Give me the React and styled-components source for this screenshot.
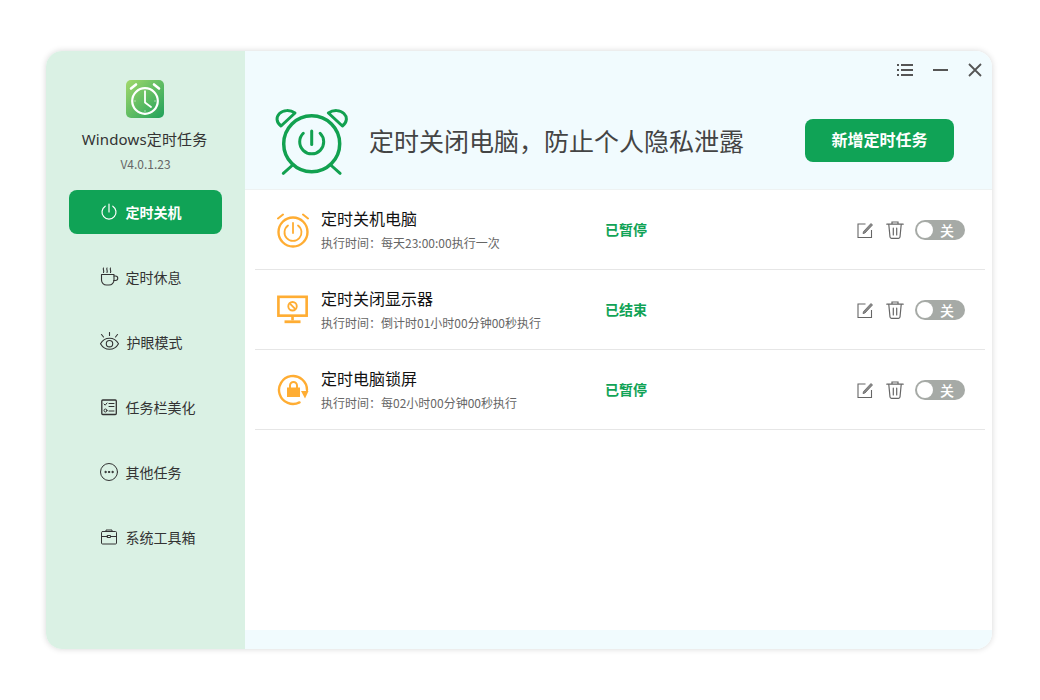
import React from "react";
import styled, { createGlobalStyle } from "styled-components";

const GlobalStyle = createGlobalStyle`
  html, body {
    margin: 0;
    padding: 0;
    background: #fff;
    font-family: "Noto Sans CJK SC", "Noto Sans", sans-serif;
  }
`;

const Page = styled.div`
  width: 1040px;
  height: 700px;
  padding: 51px 48px 51px 46px;
  box-sizing: border-box;
`;

const Win = styled.div`
  height: 100%;
  display: flex;
  border-radius: 16px;
  overflow: hidden;
  box-shadow: 0 0 6px rgba(0, 0, 0, 0.16);
`;

const Sidebar = styled.aside`
  width: 199px;
  flex: none;
  background: #daf1e4;
  display: flex;
  flex-direction: column;
  align-items: center;
  padding-top: 29px;
  box-sizing: border-box;
  > svg { margin-right: 2px; }
`;

const AppName = styled.div`
  margin: 9px 2px 0 0;
  font-family: "Noto Sans", "Noto Sans CJK SC", sans-serif;
  font-size: 15px;
  letter-spacing: 0.15px;
  line-height: 24px;
  color: #333;
`;

const Version = styled.div`
  margin-top: 4px;
  font-size: 12px;
  line-height: 18px;
  color: #666;
`;

const Nav = styled.nav`
  margin-top: 17px;
  width: 153px;
  margin-left: -1px;
  display: flex;
  flex-direction: column;
  gap: 21px;
`;

const NavItem = styled.div`
  height: 44px;
  display: flex;
  align-items: center;
  gap: 7px;
  padding-left: 30px;
  border-radius: 8px;
  font-size: 14px;
  font-weight: ${(p) => (p.$active ? 700 : 400)};
  color: ${(p) => (p.$active ? "#fff" : "#333")};
  background: ${(p) => (p.$active ? "#10a356" : "transparent")};
  svg { flex: none; }
`;

const Main = styled.main`
  flex: 1;
  display: flex;
  flex-direction: column;
  background: #f1fbfe;
`;

const Header = styled.header`
  height: 138px;
  flex: none;
  position: relative;
  display: flex;
  align-items: center;
  padding: 44px 38px 0 29px;
  box-sizing: border-box;
`;

const WinControls = styled.div`
  position: absolute;
  top: 10px;
  right: 8px;
  display: flex;
  align-items: center;
  gap: 17px;
`;

const Slogan = styled.h1`
  margin: -4px 0 0 21px;
  flex: 1;
  font-size: 25px;
  font-weight: 400;
  color: #444;
  line-height: 34px;
`;

const AddButton = styled.button`
  width: 149px;
  height: 43px;
  border: 0;
  padding: 0 0 2px;
  border-radius: 8px;
  background: #10a356;
  color: #fff;
  font-family: inherit;
  font-size: 16px;
  font-weight: 700;
  margin-top: -4px;
`;

const List = styled.section`
  flex: 1;
  background: #fff;
  border-top: 1px solid #eef2f2;
  padding: 0 7px 0 10px;
`;

const Row = styled.div`
  height: 80px;
  box-sizing: border-box;
  border-bottom: 1px solid #e6e6e6;
  display: flex;
  align-items: center;
  padding: 0 20px 0 22px;
`;

const RowIcon = styled.div`
  width: 32px;
  height: 36px;
  flex: none;
  display: flex;
  align-items: center;
  justify-content: center;
`;

const RowText = styled.div`
  width: 284px;
  margin-left: 12px;
  flex: none;
`;

const RowTitle = styled.div`
  font-size: 16px;
  line-height: 20px;
  color: #111;
`;

const RowDesc = styled.div`
  margin-top: 6px;
  font-size: 12px;
  line-height: 18px;
  color: #666;
`;

const Status = styled.div`
  flex: 1;
  padding-bottom: 2px;
  font-size: 14px;
  font-weight: 700;
  color: #10a356;
`;

const Actions = styled.div`
  display: flex;
  align-items: center;
  gap: 10px;
`;

const Toggle = styled.div`
  width: 50px;
  height: 20px;
  border-radius: 10px;
  background: #a6aaa6;
  position: relative;
  color: #fff;
  font-size: 14px;
  font-weight: 500;
  line-height: 20px;
  padding-left: 25px;
  box-sizing: border-box;
  &::before {
    content: "";
    position: absolute;
    left: 2px;
    top: 2px;
    width: 16px;
    height: 16px;
    border-radius: 50%;
    background: #fff;
  }
`;

const Footer = styled.div`
  height: 19px;
  flex: none;
`;

const line = { fill: "none", stroke: "currentColor", strokeLinecap: "round", strokeLinejoin: "round" };

const PowerIcon = () => (
  <svg width="20" height="20" viewBox="0 0 20 20" style={line} strokeWidth="1.2">
    <path d="M6.2 4.2a7 7 0 1 0 7.6 0" />
    <path d="M10 2v8" />
  </svg>
);

const CupIcon = () => (
  <svg width="20" height="20" viewBox="0 0 20 20" style={line} strokeWidth="1.1">
    <path d="M2.500 7.500H15V13a5 5 0 0 1-5 5H7.500a5 5 0 0 1-5-5z" />
    <path d="M15 9h1.500a2.200 2.200 0 0 1 0 4.500h-1.800" />
    <path d="M4.500 1c-1 1.200 1 2.500 0 4.500M8 1c-1 1.200 1 2.500 0 4.500M11.500 1c-1 1.200 1 2.500 0 4.500" />
  </svg>
);

const EyeIcon = () => (
  <svg width="21" height="20" viewBox="0 0 21 20" style={line} strokeWidth="1.1">
    <path d="M1.500 11.700c2-3.600 5-5.500 9-5.500s7 1.900 9 5.500c-2 3.600-5 5.500-9 5.500s-7-1.900-9-5.500z" />
    <circle cx="10.500" cy="11.700" r="3.200" />
    <path d="M10.500.5v3M2.500 2.500l2 2.500M18.500 2.500l-2 2.500" />
  </svg>
);

const ListCheckIcon = () => (
  <svg width="20" height="20" viewBox="0 0 20 20" style={line} strokeWidth="1">
    <rect x="2.800" y="3" width="14.500" height="14.500" rx="1" strokeWidth="1.300" />
    <path d="M5 7l1.200 1.200L8 6M10 6.500h5M10 9.500h5M10 14h5" />
    <circle cx="6.500" cy="13.500" r="1.500" />
  </svg>
);

const MoreIcon = () => (
  <svg width="20" height="20" viewBox="0 0 20 20" style={line} strokeWidth="1">
    <circle cx="10" cy="10" r="8.500" />
    <circle cx="6.500" cy="10" r="0.700" fill="currentColor" />
    <circle cx="10" cy="10" r="0.700" fill="currentColor" />
    <circle cx="13.500" cy="10" r="0.700" fill="currentColor" />
  </svg>
);

const BoxIcon = () => (
  <svg width="20" height="20" viewBox="0 0 20 20" style={line} strokeWidth="1">
    <rect x="2.500" y="4.500" width="15" height="12.500" rx="1" />
    <path d="M7 4.500V3h6v1.500M2.500 9.500h6M11.500 9.500h6" />
    <path d="M8.500 8.500h3v2h-3z" />
  </svg>
);

const AppLogo = () => (
  <svg width="38" height="38" viewBox="0 0 38 38">
    <defs>
      <linearGradient id="logoBg" x1="0" y1="0" x2="1" y2="1">
        <stop offset="0" stopColor="#a3d96c" />
        <stop offset="1" stopColor="#1fa15a" />
      </linearGradient>
    </defs>
    <rect width="38" height="38" rx="5" fill="url(#logoBg)" />
    <circle cx="19" cy="21" r="12.800" fill="none" stroke="#fff" strokeWidth="2.200" />
    <path d="M5 8.500 10 4.500M33 8.500l-5-4" fill="none" stroke="#fff" strokeWidth="2.600" strokeLinecap="round" />
    <path d="M19 11.500v11l6 4.500" fill="none" stroke="#fff" strokeWidth="1.800" strokeLinecap="round" strokeLinejoin="round" />
    <path d="M19 10.500v1M19 30.500v1M8.500 21h1M28.500 21h1" stroke="#fff" strokeWidth="1" />
  </svg>
);

const BigClock = () => (
  <svg width="74" height="68" viewBox="0 0 74 68">
    <g fill="none" stroke="#12a150" strokeLinecap="round" strokeLinejoin="round">
      <circle cx="37.700" cy="35.700" r="28" strokeWidth="3.500" />
      <path d="M7 18 21 5C16 1.500 9 2 5.500 5.500 2 9 2 14 7 18z" strokeWidth="3" />
      <path d="M68.400 18 54.400 5c5-3.500 12-3 15.500.5 3.500 3.500 3.500 8.500-1.500 12.500z" strokeWidth="3" />
      <path d="M18.700 57l-9.400 8.300M56.700 57l9.400 8.300" strokeWidth="3" />
      <path d="M29.300 25.300a12 12 0 1 0 16.800 0" strokeWidth="3" />
      <path d="M37.700 23v13.500" strokeWidth="3" />
    </g>
  </svg>
);

const AlarmOrange = () => (
  <svg width="32" height="36" viewBox="0 0 32 36" fill="none" stroke="#ffad33" strokeLinecap="round">
    <circle cx="16" cy="20" r="14.500" strokeWidth="2.400" />
    <path d="M1 6.500 6 2.500M31 6.500l-5-4" strokeWidth="2" />
    <path d="M11 13.500a8.500 8.500 0 1 0 10 0" strokeWidth="1.800" />
    <path d="M16 11v10" strokeWidth="1.800" />
  </svg>
);

const MonitorOrange = () => (
  <svg width="34" height="32" viewBox="0 0 34 32" fill="none" stroke="#ffad33">
    <rect x="1.500" y="2" width="30" height="20" strokeWidth="2.800" />
    <path d="M16.500 22v5" strokeWidth="2.800" />
    <path d="M8 28.500h17" strokeWidth="3" />
    <circle cx="16.500" cy="12" r="4.500" strokeWidth="2" />
    <path d="M13.500 9l6 6" strokeWidth="2" />
  </svg>
);

const LockOrange = () => (
  <svg width="32" height="34" viewBox="0 0 32 34" fill="none" stroke="#ffad33">
    <path d="M30 17A14 14 0 1 0 22.500 29.400" strokeWidth="2.400" strokeLinecap="round" />
    <path d="M24 18h7.500l-3.500 7.500z" fill="#ffad33" stroke="none" />
    <rect x="10" y="14.500" width="13" height="9.500" fill="#ffad33" stroke="none" />
    <path d="M13 15v-2.500a3.500 3.500 0 0 1 7 0V15" strokeWidth="2" />
  </svg>
);

const EditIcon = () => (
  <svg width="20" height="20" viewBox="0 0 20 20" fill="none" stroke="#666" strokeWidth="1.100">
    <path d="M10.500 4H3v13.500h13.500V10" />
    <path d="M8.500 11.500 16 3.500l1.500 1.500-7.500 8-2 .6z" fill="#888" strokeWidth="0.800" />
  </svg>
);

const TrashIcon = () => (
  <svg width="20" height="20" viewBox="0 0 20 20" fill="none" stroke="#666" strokeWidth="1.200" strokeLinecap="round">
    <path d="M1.800 4.200h16.400M7 4V2h6v2" />
    <path d="M3.800 4.500 5 17a1.500 1.500 0 0 0 1.500 1.300h7A1.500 1.500 0 0 0 15 17l1.200-12.500" />
    <path d="M8.300 8v7M11.700 8v7" />
  </svg>
);

const navItems = [
  { label: "定时关机", icon: <PowerIcon />, active: true },
  { label: "定时休息", icon: <CupIcon /> },
  { label: "护眼模式", icon: <EyeIcon /> },
  { label: "任务栏美化", icon: <ListCheckIcon /> },
  { label: "其他任务", icon: <MoreIcon /> },
  { label: "系统工具箱", icon: <BoxIcon /> },
];

const tasks = [
  { title: "定时关机电脑", desc: "执行时间：每天23:00:00执行一次", status: "已暂停", icon: <AlarmOrange /> },
  { title: "定时关闭显示器", desc: "执行时间：倒计时01小时00分钟00秒执行", status: "已结束", icon: <MonitorOrange /> },
  { title: "定时电脑锁屏", desc: "执行时间：每02小时00分钟00秒执行", status: "已暂停", icon: <LockOrange /> },
];

export default function App() {
  return (
    <Page>
      <GlobalStyle />
      <Win>
        <Sidebar>
          <AppLogo />
          <AppName>Windows定时任务</AppName>
          <Version>V4.0.1.23</Version>
          <Nav>
            {navItems.map((item) => (
              <NavItem key={item.label} $active={item.active}>
                {item.icon}
                {item.label}
              </NavItem>
            ))}
          </Nav>
        </Sidebar>
        <Main>
          <Header>
            <WinControls>
              <svg width="18" height="18" viewBox="0 0 18 18" stroke="#555" strokeWidth="1.800">
                <path d="M1 4h2M1 9h2M1 14h2" />
                <path d="M5 4h12M5 9h12M5 14h12" />
              </svg>
              <svg width="18" height="18" viewBox="0 0 18 18" stroke="#555" strokeWidth="1.800">
                <path d="M2 9h15" />
              </svg>
              <svg width="18" height="18" viewBox="0 0 18 18" stroke="#555" strokeWidth="1.800">
                <path d="M3 3l12 12M15 3 3 15" />
              </svg>
            </WinControls>
            <BigClock />
            <Slogan>定时关闭电脑，防止个人隐私泄露</Slogan>
            <AddButton>新增定时任务</AddButton>
          </Header>
          <List>
            {tasks.map((task) => (
              <Row key={task.title}>
                <RowIcon>{task.icon}</RowIcon>
                <RowText>
                  <RowTitle>{task.title}</RowTitle>
                  <RowDesc>{task.desc}</RowDesc>
                </RowText>
                <Status>{task.status}</Status>
                <Actions>
                  <EditIcon />
                  <TrashIcon />
                  <Toggle>关</Toggle>
                </Actions>
              </Row>
            ))}
          </List>
          <Footer />
        </Main>
      </Win>
    </Page>
  );
}
